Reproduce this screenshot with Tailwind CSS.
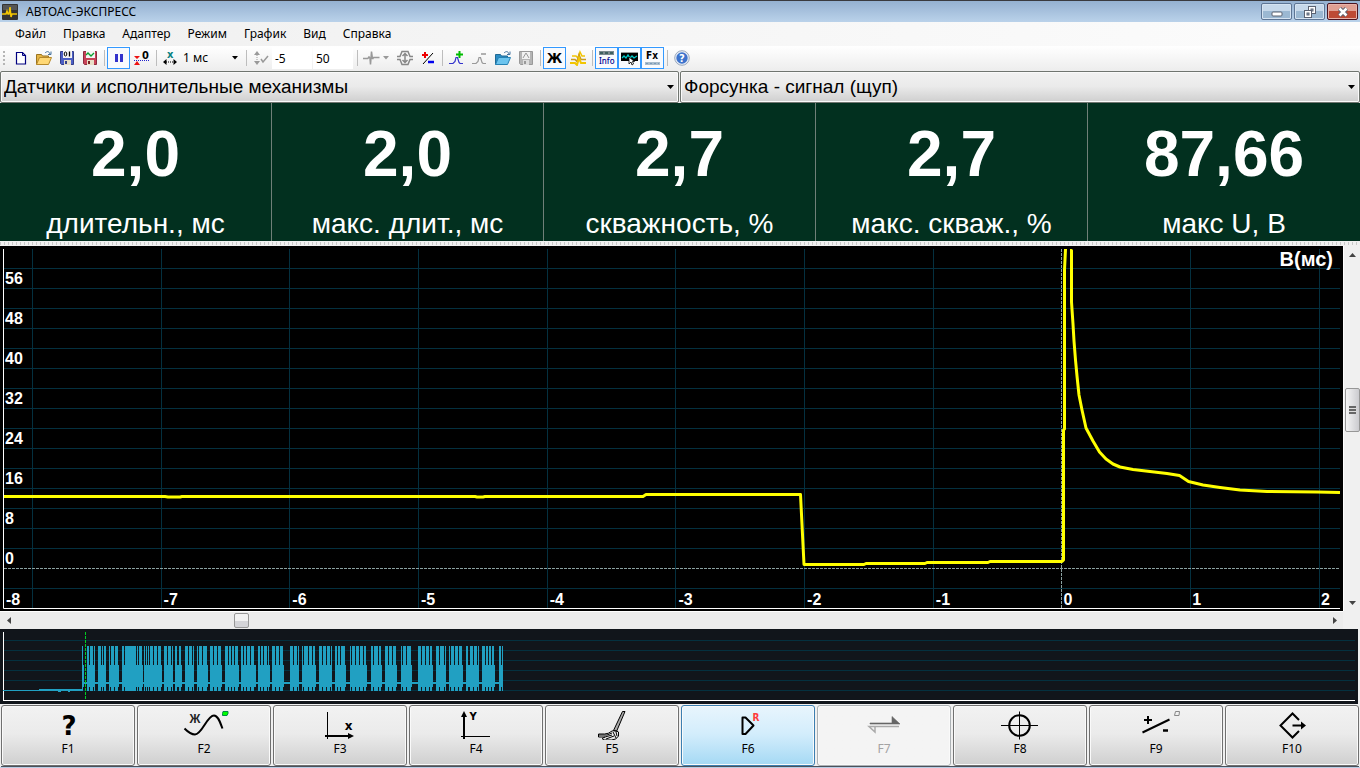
<!DOCTYPE html>
<html lang="ru">
<head>
<meta charset="utf-8">
<title>АВТОАС-ЭКСПРЕСС</title>
<script src="https://cdn.jsdelivr.net/npm/@tailwindcss/browser@4"></script>
</head>
<body class="h-screen overflow-hidden flex flex-col bg-[#f0f0f0] text-black text-[12px] font-['Noto_Sans',sans-serif]">

<!-- Title bar -->
<header class="h-[22px] shrink-0 flex items-center border-t border-[#3a3a3f] bg-linear-to-b from-[#95b1d1] to-[#bad2ea] pl-[2px] pr-[2px]">
  <svg class="size-4" viewBox="0 0 16 16"><rect width="16" height="16" rx="1" fill="#333"/><rect x="1" y="1" width="14" height="5" fill="#555"/><path d="M0 10h4l1-3 1 3h1l1-7 1 10 1-3h5" fill="none" stroke="#f5c800" stroke-width="1.5"/></svg>
  <h1 class="ml-2 grow text-[12px] leading-4">АВТОАС-ЭКСПРЕСС</h1>
  <div class="flex gap-[2px] h-[17px]">
    <button aria-label="Свернуть" class="w-[31px] rounded-[2px] border border-[#5d7594] bg-linear-to-b from-[#c6d8ea] from-50% to-[#9bb8d2] to-50% grid place-items-center shadow-[inset_0_0_0_1px_#d5e3f1]"><svg width="12" height="12" viewBox="0 0 12 12"><rect x="1" y="6" width="10" height="4" rx="1" fill="#fff" stroke="#5b6271"/></svg></button>
    <button aria-label="Восстановить" class="w-[31px] rounded-[2px] border border-[#5d7594] bg-linear-to-b from-[#c6d8ea] from-50% to-[#9bb8d2] to-50% grid place-items-center shadow-[inset_0_0_0_1px_#d5e3f1]"><svg width="14" height="14" viewBox="0 0 14 14" stroke="#5b6271"><rect x="5.500" y="1.500" width="7" height="7" fill="#fff"/><rect x="8" y="4" width="2" height="2" fill="#9bb8d2"/><rect x="1.500" y="5.500" width="7" height="7" fill="#fff"/><rect x="4" y="8" width="2" height="2" fill="#9bb8d2"/></svg></button>
    <button aria-label="Закрыть" class="w-[31px] rounded-[2px] border border-[#4b1420] bg-linear-to-b from-[#e0a093] from-50% to-[#bd4a35] to-50% grid place-items-center shadow-[inset_0_0_0_1px_#e8b3aa]"><svg width="12" height="10" viewBox="0 0 12 10" fill="none"><path d="M2.500 1.500l7 7M9.500 1.500l-7 7" stroke="#5b6271" stroke-width="4.500"/><path d="M2.500 1.500l7 7M9.500 1.500l-7 7" stroke="#fff" stroke-width="2.500"/></svg></button>
  </div>
</header>

<!-- Menu -->
<nav class="h-6 shrink-0 flex items-center gap-[17px] pl-[15px] text-[12px] leading-4 bg-linear-to-r from-[#f0f0f0] to-[#fcfcfc]">
  <a href="#">Файл</a><a href="#">Правка</a><a href="#">Адаптер</a><a href="#">Режим</a><a href="#">График</a><a href="#">Вид</a><a href="#">Справка</a>
</nav>

<!-- Toolbar -->
<div role="toolbar" class="h-[25px] shrink-0 flex items-center pb-[1px] bg-linear-to-b from-white to-[#ededed] *:shrink-0 [&_svg]:block">
  <div class="w-[9px] h-[14px] pl-[3px]"><div class="w-[2px] h-full bg-[repeating-linear-gradient(180deg,#b5b5b5_0_2px,transparent_2px_4px)]"></div></div>
  <button aria-label="Новый" class="w-[23px] h-[22px] grid place-items-center"><svg width="16" height="16" viewBox="0 0 16 16"><path d="M3.500 2.500h6l3 3v8.500h-9z" fill="#fff" stroke="#000080" stroke-width="1.200"/><path d="M9.500 2.500v3h3" fill="none" stroke="#000080"/></svg></button>
  <button aria-label="Открыть" class="w-[23px] h-[22px] grid place-items-center"><svg width="16" height="16" viewBox="0 0 16 16"><path d="M.5 14.500v-10h5l1 1.500h6v3" fill="#e5b545" stroke="#9b7420"/><path d="M.5 14.500l3-7h12l-3 7z" fill="#ffd875" stroke="#b5882b"/><path d="M9 3c2-2 4-2 5 1M15 1.500v3h-3" fill="none" stroke="#45739f"/></svg></button>
  <button aria-label="Сохранить данные" class="w-[23px] h-[22px] grid place-items-center"><svg width="16" height="16" viewBox="0 0 16 16"><path d="M1.500 1.500h13v13h-12l-1-1z" fill="#4c5fc5" stroke="#343f8a"/><rect x="4" y="1" width="9" height="7" fill="#f4f4f4"/><rect x="5" y="10" width="7" height="5" fill="#e8dfc8"/><rect x="6" y="11" width="2" height="3" fill="#343f8a"/><ellipse cx="6.500" cy="4" rx="1.300" ry="2" fill="none" stroke="#000"/><path d="M10.500 1.500v5" stroke="#000" stroke-width="1.300"/></svg></button>
  <button aria-label="Сохранить график" class="w-[23px] h-[22px] grid place-items-center"><svg width="16" height="16" viewBox="0 0 16 16"><path d="M1.500 1.500h13v13h-12l-1-1z" fill="#c74358" stroke="#8d2c40"/><rect x="4" y="1" width="9" height="7" fill="#f4f4f4"/><rect x="5" y="10" width="7" height="5" fill="#e8dfc8"/><rect x="6" y="11" width="2" height="3" fill="#722"/><path d="M4 5l2-2 3 3 3-3" fill="none" stroke="#09a030" stroke-width="1.300"/></svg></button>
  <div class="w-[6px] h-4 grid justify-center"><i class="w-px h-full bg-[#bdbdbd]"></i></div>
  <button aria-label="Пауза" aria-pressed="true" class="w-[23px] h-[22px] border border-[#3399ff] bg-[#f8fafd] grid place-items-center"><svg width="10" height="10" viewBox="0 0 10 10"><path d="M1 1h3v8H1zM6 1h3v8H6z" fill="#3333cc"/></svg></button>
  <button aria-label="Нулевой уровень" class="w-[23px] h-[22px] grid place-items-center"><svg width="16" height="16" viewBox="0 0 16 16"><path d="M0 6h6L3 9zM0 15h6l-3-4z" fill="#e11"/><path d="M0 10.500h16" stroke="#22c" stroke-dasharray="1 1"/><text x="8" y="9" font-family="DejaVu Sans Condensed, DejaVu Sans" font-size="11" font-weight="700">0</text></svg></button>
  <div class="w-[6px] h-4 grid justify-center"><i class="w-px h-full bg-[#bdbdbd]"></i></div>
  <span class="w-[22px] grid place-items-center"><svg width="16" height="16" viewBox="0 0 16 16"><path d="M1 12l3.500-3v6zM15 12l-3.500-3v6z"/><path d="M4 12h8" stroke="#000" stroke-dasharray="1 1"/><text x="5" y="8" font-family="DejaVu Sans" font-size="10" font-weight="700" fill="#088080">x</text></svg></span>
  <div class="w-[62px] grid items-center">
    <select aria-label="Масштаб времени" class="col-start-1 row-start-1 appearance-none w-full pl-[2px] leading-5"><option>1 мс</option></select>
    <svg class="col-start-1 row-start-1 justify-self-end mr-[5px] pointer-events-none" width="6" height="4" viewBox="0 0 6 4"><path d="M0 0h6L3 3.500z"/></svg>
  </div>
  <div class="w-[6px] h-4 grid justify-center"><i class="w-px h-full bg-[#bdbdbd]"></i></div>
  <button aria-label="Пределы по Y" class="w-[23px] h-[22px] grid place-items-center"><svg width="16" height="16" viewBox="0 0 16 16" fill="#999"><path d="M1 5l3-4 3 4zM1 11l3 4 3-4z"/><path d="M4 5v6" stroke="#999" stroke-dasharray="1 1"/><path d="M8 9l2 3 5-6" fill="none" stroke="#999" stroke-width="1.500"/></svg></button>
  <input aria-label="Минимум" value="-5" class="w-10 h-[22px] bg-white pl-[3px]">
  <input aria-label="Максимум" value="50" class="w-10 h-[22px] ml-px bg-white pl-[3px]">
  <div class="w-[8px] h-4 grid justify-center"><i class="w-px h-full bg-[#bdbdbd]"></i></div>
  <button aria-label="Синхронизация" class="w-[32px] h-[22px] flex items-center pl-[2px] gap-[3px]"><svg width="17" height="16" viewBox="0 0 17 16"><path d="M0 8.500h5l1-2 1 2 .5 6L8.500 1.500 9.500 9l1-1.500h6" fill="none" stroke="#999" stroke-width="1.500" stroke-linejoin="bevel"/></svg><svg width="6" height="4" viewBox="0 0 6 4"><path d="M0 0h6L3 3.500z" fill="#999"/></svg></button>
  <button aria-label="Автомасштаб" class="w-[23px] h-[22px] grid place-items-center"><svg width="16" height="16" viewBox="0 0 16 16" fill="none" stroke="#888" stroke-width="1.500"><path d="M0 6.500h3l2-5h6l2 5h3M0 9.500h3l2 5h6l2-5h3M8 4v8M5.500 6L8 3.500 10.500 6M5.500 10L8 12.500l2.500-2.500"/></svg></button>
  <button aria-label="Полярность" class="w-[23px] h-[22px] grid place-items-center"><svg width="16" height="16" viewBox="0 0 16 16" fill="none"><path d="M2 5h6M5 2v6" stroke="#e00" stroke-width="2"/><path d="M3 14L13 3" stroke="#000"/><path d="M8 12h6" stroke="#00e" stroke-width="2.500"/></svg></button>
  <div class="w-[6px] h-4 grid justify-center"><i class="w-px h-full bg-[#bdbdbd]"></i></div>
  <button aria-label="Добавить эталон" class="w-[23px] h-[22px] grid place-items-center"><svg width="16" height="16" viewBox="0 0 16 16" fill="none"><path d="M0 13.500h4l2-2 1-4h1.500l1.500 5 1 1h3" stroke="#33c" stroke-width="1.200"/><path d="M7 4.500h7M10.500 1v7" stroke="#0b0" stroke-width="2"/></svg></button>
  <button aria-label="Убрать эталон" class="w-[23px] h-[22px] grid place-items-center"><svg width="16" height="16" viewBox="0 0 16 16" fill="none" stroke="#999"><path d="M0 13.500h4l2-2 1-4h1.500l1.500 5 1 1h3" stroke-width="1.200"/><path d="M9 4h5" stroke-width="1.500"/></svg></button>
  <button aria-label="Открыть эталон" class="w-[23px] h-[22px] grid place-items-center"><svg width="16" height="16" viewBox="0 0 16 16"><path d="M.5 14.500v-10h5l1 1.500h6v3" fill="#2b8cc4" stroke="#206a94"/><path d="M.5 14.500l3-7h12l-3 7z" fill="#6cc4ee" stroke="#2682b4"/><path d="M9 3c2-2 4-2 5 1M15 1.500v3h-3" fill="none" stroke="#45739f"/></svg></button>
  <button aria-label="Сохранить эталон" class="w-[23px] h-[22px] grid place-items-center"><svg width="16" height="16" viewBox="0 0 16 16"><path d="M1.500 1.500h13v13h-12l-1-1z" fill="#b5b5b5" stroke="#999"/><rect x="4" y="2" width="8" height="7" fill="#f2f2f2"/><path d="M5 8l3-5 3 5" fill="none" stroke="#999"/><rect x="5" y="10" width="6" height="5" fill="#ddd"/><rect x="6" y="11" width="2" height="3" fill="#999"/></svg></button>
  <div class="w-[6px] h-4 grid justify-center"><i class="w-px h-full bg-[#bdbdbd]"></i></div>
  <button aria-pressed="true" class="w-[23px] h-[22px] border border-[#3399ff] bg-[#f8fafd] grid place-items-center font-['DejaVu_Sans_Condensed','DejaVu_Sans'] font-bold text-[14px] leading-4">Ж</button>
  <button aria-label="Сигналы" class="w-[23px] h-[22px] grid place-items-center"><svg width="16" height="16" viewBox="0 0 16 16" fill="none" stroke="#f2c500" stroke-width="1.500"><path d="M2 6h4l2 2 2-6 2 4h3"/><path d="M1 9.500h4l2 2 2-7 2 5h5" stroke="#c89b20"/><path d="M0 13h5l2 2 2-7 2 5h5" stroke-width="2"/></svg></button>
  <div class="w-[6px] h-4 grid justify-center"><i class="w-px h-full bg-[#bdbdbd]"></i></div>
  <button aria-label="Info" aria-pressed="true" class="w-[23px] h-[22px] border border-[#3399ff] bg-[#f8fafd] grid place-items-center"><svg width="17" height="16" viewBox="0 0 17 16"><rect x="1" y="1" width="15" height="4" fill="#7b8b90"/><path d="M2 3h13" stroke="#3e6060" stroke-width="2" stroke-dasharray="3 2"/><text x="1" y="14" font-family="Noto Sans" font-size="8" font-weight="500" fill="#000090">Info</text></svg></button>
  <button aria-label="Осциллограмма" aria-pressed="true" class="w-[23px] h-[22px] border border-[#3399ff] bg-[#f8fafd] grid place-items-center"><svg width="17" height="16" viewBox="0 0 17 16"><path d="M0 2.500h17" stroke="#999"/><rect y="3" width="17" height="8" fill="#000"/><path d="M1 8l2-2 2 2 2-3 2 3 2-2 2 2 3-2" fill="none" stroke="#00c8c8" stroke-width="1.300"/><path d="M8 7v7l2-2 1 3 1.500-1-1-2.500h2z" fill="#fff" stroke="#000" stroke-width=".8"/></svg></button>
  <button aria-label="Fx" aria-pressed="true" class="w-[23px] h-[22px] border border-[#3399ff] bg-[#f8fafd] grid place-items-center"><svg width="17" height="16" viewBox="0 0 17 16"><text x="2" y="9" font-family="DejaVu Sans Condensed, DejaVu Sans" font-size="10" font-weight="700">Fx</text><rect x="1" y="12" width="15" height="3" fill="#a9bccb"/><path d="M2 13.500h13" stroke="#7899b8" stroke-dasharray="2 2"/></svg></button>
  <div class="w-[6px] h-4 grid justify-center"><i class="w-px h-full bg-[#bdbdbd]"></i></div>
  <button aria-label="Помощь" class="w-[23px] h-[22px] grid place-items-center"><svg width="16" height="16" viewBox="0 0 16 16"><circle cx="8" cy="8" r="7.300" fill="#e9eef6" stroke="#9aa8bd"/><circle cx="8" cy="8" r="5.700" fill="#3d73cc"/><text x="8" y="12" text-anchor="middle" font-family="DejaVu Sans" font-size="10" font-weight="700" fill="#fff">?</text></svg></button>
</div>

<!-- Mode selectors -->
<div class="h-8 shrink-0 grid grid-cols-2 text-[19px] font-['Liberation_Sans',sans-serif]">
  <div class="grid items-center mr-px">
    <select aria-label="Группа измерений" class="col-start-1 row-start-1 w-full h-8 appearance-none rounded-[2px] border border-[#707570] bg-linear-to-b from-[#f2f2f2] from-0% via-[#ebebeb] via-47% to-[#cfcfcf] pl-[3px] shadow-[inset_0_0_0_1px_#fafafa]"><option>Датчики и исполнительные механизмы</option></select>
    <svg class="col-start-1 row-start-1 justify-self-end mr-[5px] pointer-events-none" width="7" height="4" viewBox="0 0 7 4"><path d="M0 0h7L3.500 4z"/></svg>
  </div>
  <div class="grid items-center">
    <select aria-label="Вид измерения" class="col-start-1 row-start-1 w-full h-8 appearance-none rounded-[2px] border border-[#707570] bg-linear-to-b from-[#f2f2f2] from-0% via-[#ebebeb] via-47% to-[#cfcfcf] pl-[3px] shadow-[inset_0_0_0_1px_#fafafa]"><option>Форсунка - сигнал (щуп)</option></select>
    <svg class="col-start-1 row-start-1 justify-self-end mr-[5px] pointer-events-none" width="7" height="4" viewBox="0 0 7 4"><path d="M0 0h7L3.500 4z"/></svg>
  </div>
</div>

<!-- Readings -->
<section class="h-[138px] shrink-0 grid grid-cols-5 bg-[#02301f] text-white text-center font-['Liberation_Sans',sans-serif] *:border-r *:border-[#6f8078] *:pt-[17px] *:last:border-r-0">
  <div><p class="text-[64px] leading-[68px] font-bold">2,0</p><p class="mt-5 text-[28px] leading-8">длительн., мс</p></div>
  <div><p class="text-[64px] leading-[68px] font-bold">2,0</p><p class="mt-5 text-[28px] leading-8">макс. длит., мс</p></div>
  <div><p class="text-[64px] leading-[68px] font-bold">2,7</p><p class="mt-5 text-[28px] leading-8">скважность, %</p></div>
  <div><p class="text-[64px] leading-[68px] font-bold">2,7</p><p class="mt-5 text-[28px] leading-8">макс. скваж., %</p></div>
  <div><p class="text-[64px] leading-[68px] font-bold">87,66</p><p class="mt-5 text-[28px] leading-8">макс U, В</p></div>
</section>
<div class="h-[5px] shrink-0 py-px bg-[#f0f0f0]"><div class="h-full bg-[repeating-linear-gradient(90deg,#c8c8c8_0_1px,#f0f0f0_1px_4px)]"></div></div>

<!-- Main chart and its vertical scrollbar -->
<main class="grow min-h-0 flex">
  <div id="chart" class="grow min-w-0 relative bg-black text-white font-bold font-['Liberation_Sans',sans-serif]">
    <svg id="plot" class="absolute inset-0 size-full" viewBox="0 0 1343 365" preserveAspectRatio="none">
      <g id="grid" stroke="#04303f"></g>
      <path d="M4 322.500H1339" stroke="#8aa0a0" stroke-dasharray="3 1" vector-effect="non-scaling-stroke"/>
      <path d="M1061.500 3V362" stroke="#8aa0a0" stroke-dasharray="3 1" vector-effect="non-scaling-stroke"/>
      <path d="M3.500 3V362.500H1340" fill="none" stroke="#fff" vector-effect="non-scaling-stroke"/>
      <path fill="none" stroke="#ff0" stroke-width="3" stroke-linejoin="round" vector-effect="non-scaling-stroke" d="M4 250.500H165L168 251H180L182 250.500H475L477 251H483L485 250.500H643L646 248.500H800.500L804 318.500H864L866 317.500H925L927 316.500H988L990 315.500H1062L1063.500 314V184L1064.500 183V24L1065.500 3M1070 4.500H1071.500V56L1073 78L1074 95L1075.500 114L1077 130L1079 149L1082 164L1086 182L1093 195L1099.500 206L1106 213L1113 218L1120 221L1133 223.500L1150 225.500L1167 227.500L1179.500 229.500L1188.500 235.500L1203 239L1220 241.500L1240 244L1267 245.500L1317 246L1340 246.500"/>
    </svg>
    <span class="absolute right-[10px] top-[1px] text-[20px] leading-6">В(мс)</span>
  </div>
  <div role="scrollbar" aria-label="Вертикальная прокрутка" aria-controls="chart" aria-orientation="vertical" aria-valuenow="43" class="w-[17px] shrink-0 flex flex-col items-center bg-[#f0f0f0] border-l border-white">
    <button aria-label="Вверх" class="h-[17px] w-full grid place-items-center"><svg width="7" height="4" viewBox="0 0 7 4"><path d="M0 4h7L3.500 0z" fill="#444"/></svg></button>
    <div class="grow-[125]"></div>
    <div class="h-[44px] w-[15px] rounded-[2px] border border-[#979797] bg-linear-to-r from-[#f5f5f5] to-[#cbcbcf] grid place-items-center"><div class="w-[7px] h-[8px] bg-[repeating-linear-gradient(180deg,#666_0_2px,#ddd_2px_3px)]"></div></div>
    <div class="grow-[163]"></div>
    <button aria-label="Вниз" class="h-[17px] w-full grid place-items-center"><svg width="7" height="4" viewBox="0 0 7 4"><path d="M0 0h7L3.500 4z" fill="#444"/></svg></button>
  </div>
</main>

<!-- Horizontal scrollbar -->
<div role="scrollbar" aria-label="Горизонтальная прокрутка" aria-controls="chart" aria-orientation="horizontal" aria-valuenow="17" class="h-[18px] shrink-0 mr-[17px] flex items-center bg-[#ececec] border-t border-white">
  <button aria-label="Влево" class="w-[17px] h-full grid place-items-center"><svg width="4" height="7" viewBox="0 0 4 7"><path d="M4 0v7L0 3.500z" fill="#444"/></svg></button>
  <div class="grow-[217]"></div>
  <div class="h-[15px] w-[15px] rounded-[2px] border border-[#979797] bg-linear-to-b from-[#f2f2f2] from-50% to-[#d4d4d8] to-50%"></div>
  <div class="grow-[1077]"></div>
  <button aria-label="Вправо" class="w-[17px] h-full grid place-items-center"><svg width="4" height="7" viewBox="0 0 4 7"><path d="M0 0v7l4-3.500z" fill="#444"/></svg></button>
</div>

<!-- Whole record overview -->
<div class="h-[75px] shrink-0 mr-[2px] bg-[#11151b]">
  <svg class="block size-full" viewBox="0 0 1358 75" preserveAspectRatio="none" shape-rendering="crispEdges">
    <path d="M4 11.500H1355M4 21.500H1355M4 31.500H1355M4 41.500H1355M4 51.500H1355M4 61.500H1355" stroke="#04303f"/>
    <path d="M3.500 3V71.500H1355" fill="none" stroke="#fff"/>
    <path d="M3 61h36v-1h43v2H70v1h-2v-1h-7v1h-3v-1H3z" fill="#21a0c2"/>
    <g id="bursts" fill="#21a0c2"></g>
    <path d="M85.500 3V70" stroke="#0c2" stroke-dasharray="3 1"/>
  </svg>
</div>

<!-- Function keys -->
<footer class="shrink-0 pt-[1px] px-px border-b border-[#b9cde4]">
  <div class="grid grid-cols-10 gap-[2px] text-[12px] leading-4 border-b border-[#4a525c] *:h-[61px] *:flex *:flex-col *:items-center *:pt-[2px] *:rounded-[3px] *:border *:border-[#707070] *:bg-linear-to-b *:from-[#f2f2f2] *:from-0% *:via-[#ebebeb] *:via-47% *:to-[#cfcfcf] *:shadow-[inset_0_0_0_1px_#fafafa] [&_svg]:w-14 [&_svg]:h-8 [&_svg]:mb-px [&_svg]:shrink-0">
    <button><svg viewBox="0 0 56 32"><text x="29" y="27" text-anchor="middle" font-family="DejaVu Sans" font-size="26" font-weight="700">?</text></svg>F1</button>
    <button><svg viewBox="0 0 56 32"><path d="M8.500 20.500C13 25 16 26.500 19 26.500C26 26.500 31 7.500 38 7.500C42 7.500 44 14 46.500 20.500" fill="none" stroke="#000" stroke-width="2"/><text x="19" y="15" text-anchor="middle" font-family="Liberation Sans" font-size="12" font-weight="700" fill="#222">Ж</text><path d="M47 3.500h5v2l-1 2h-4.500v-2z" fill="#0f0" stroke="#084"/></svg>F2</button>
    <button><svg viewBox="0 0 56 32"><path d="M15.500 4v27" stroke="#000"/><path d="M13 28h25" stroke="#000" stroke-width="2"/><path d="M36 25l6 3-6 3z"/><text x="36.500" y="22" text-anchor="middle" font-family="DejaVu Sans" font-size="12" font-weight="700">x</text></svg>F3</button>
    <button><svg viewBox="0 0 56 32"><path d="M16 7v24" stroke="#000" stroke-width="2"/><path d="M13 28.500h29" stroke="#000"/><path d="M16 3l3 6h-6z"/><text x="25" y="12" text-anchor="middle" font-family="DejaVu Sans" font-size="10" font-weight="700">Y</text></svg>F4</button>
    <button><svg viewBox="0 0 56 32" fill="none" stroke="#000"><path d="M38.500 3.500h2.500l-8.500 20-3-1z" fill="#aaa"/><path d="M28 23q4-1.500 6.500 1v4q-2 4-7 4H20l-2-1.500 3-1.500h-6.500v-3h6q4 0 7.500-3zM21 29l7-2M15 27h8l5-2M22 31l8-3M29 24l3 6M32 24l1 4"/></svg>F5</button>
    <button class="border-[#3c7fb1]! from-[#e8f5fd]! via-[#d3edfc]! to-[#a5d9f4]!"><svg viewBox="0 0 56 32"><path d="M22.500 9.500h3l8 8-8 8.500h-3z" fill="none" stroke="#000" stroke-width="2" stroke-linejoin="round"/><text x="36" y="13" text-anchor="middle" font-family="DejaVu Sans Condensed, DejaVu Sans" font-size="10" font-weight="700" fill="#ff3b3b">R</text></svg>F6</button>
    <button disabled class="border-[#adb2b5]! from-[#f4f4f4]! via-[#f4f4f4]! to-[#f4f4f4]! text-[#a3a3a3]"><svg viewBox="0 0 56 32"><path d="M14 15h22V8.500l8 7.500H14z" fill="#666" stroke="#666" stroke-width=".6"/><path d="M43 18.500H13l6 5.500v-5" fill="none" stroke="#aaa" stroke-width="1.500"/></svg>F7</button>
    <button><svg viewBox="0 0 56 32" fill="none" stroke="#000"><circle cx="27.500" cy="17.500" r="10.300" stroke-width="2"/><path d="M9 17.500h37M27.500 3.500v28"/></svg>F8</button>
    <button><svg viewBox="0 0 56 32" fill="none" stroke="#000" stroke-width="2"><path d="M16 12h8M20 8v8M14.500 24.500l27-13"/><path d="M35 22.500h5" stroke-width="2.500"/><path d="M47.500 3.500h4l-.5 4h-4.500z" stroke="#888" stroke-width="1"/></svg>F9</button>
    <button><svg viewBox="0 0 56 32" fill="none" stroke="#000" stroke-width="2"><path d="M35 12l-6.500-6.500L16.500 17.500l12 12L35 23M28.500 17.500h10"/><path d="M37 13.500l5 4-5 4z" fill="#000" stroke="none"/></svg>F10</button>
  </div>
</footer>

<script>
  const NS = 'http://www.w3.org/2000/svg';
  const W = 1343, H = 365;
  const grid = document.getElementById('grid');
  const chart = document.getElementById('chart');
  function line(d) {
    const p = document.createElementNS(NS, 'path');
    p.setAttribute('d', d);
    p.setAttribute('vector-effect', 'non-scaling-stroke');
    grid.append(p);
  }
  function label(text, x, y) {
    const s = document.createElement('span');
    s.className = 'absolute text-[16px] leading-4 -translate-y-1/2';
    s.textContent = text;
    s.style.left = x / W * 100 + '%';
    s.style.top = y / H * 100 + '%';
    chart.append(s);
  }
  for (let y = 22; y < 360; y += 20) if (y !== 322) line(`M4 ${y + 0.5}H1340`);
  [32, 161, 289, 418, 547, 675, 804, 933, 1190, 1319].forEach(x => line(`M${x + 0.5} 3V362`));
  for (let v = 0; v <= 56; v += 8) label(v, 5, 313 - v * 5);
  label('-8', 6, 354);
  for (let v = -7; v <= 2; v++) label(v, 1061.5 + v * 128.7 + (v < 0 ? 3 : 2), 354);

  // Bursts of the record: [body start, body end, [tall pulse start, end], ...] in thirds of a unit
  const bursts = [
    [246,252,[246,249]],
    [261,285,[261,267],[270,279],[282,285]],
    [294,318,[294,303],[306,309],[312,318]],
    [327,357,[327,330],[333,342],[345,354]],
    [366,429,[366,372],[375,408],[411,414],[417,426]],
    [432,486,[432,435],[438,441],[444,447],[450,459],[462,471],[474,483]],
    [492,519,[492,501],[504,513],[516,519]],
    [525,546,[525,531],[537,543]],
    [555,582,[555,564],[567,576],[579,582]],
    [591,624,[591,594],[597,606],[609,621]],
    [630,666,[630,639],[642,651],[654,663]],
    [675,717,[675,684],[687,693],[696,702],[705,714]],
    [723,768,[723,729],[732,738],[741,750],[753,762]],
    [774,810,[774,780],[783,789],[792,801],[804,807]],
    [816,852,[816,825],[828,837],[840,849]],
    [870,897,[870,879],[882,891],[894,897]],
    [906,948,[906,909],[912,924],[927,936],[939,945]],
    [957,996,[957,966],[969,978],[981,990],[993,996]],
    [1005,1038,[1005,1011],[1014,1020],[1023,1035]],
    [1050,1101,[1050,1053],[1056,1065],[1068,1077],[1080,1089],[1092,1098]],
    [1113,1146,[1113,1119],[1122,1134],[1137,1143]],
    [1155,1191,[1155,1164],[1167,1176],[1179,1188]],
    [1203,1236,[1203,1206],[1209,1218],[1221,1233]],
    [1254,1299,[1254,1263],[1266,1275],[1278,1287],[1290,1296]],
    [1308,1338,[1308,1317],[1320,1332],[1335,1338]],
    [1347,1389,[1347,1350],[1353,1362],[1365,1374],[1377,1386]],
    [1398,1437,[1398,1404],[1410,1419],[1422,1431],[1434,1437]],
    [1446,1485,[1446,1455],[1458,1464],[1467,1473],[1476,1482]],
    [1497,1509,[1497,1503],[1506,1509]]
  ];
  function addBursts(d) {
    const p = document.createElementNS(NS, 'path');
    p.setAttribute('d', d);
    document.getElementById('bursts').append(p);
  }
  addBursts('M82 53H503v2H82z');
  bursts.forEach(([a, b, ...tall]) => {
    addBursts(`M${a / 3} 36H${b / 3}V58H${a / 3}z`);
    tall.forEach(([s, e]) => addBursts(`M${s / 3} 17H${e / 3}V62H${s / 3}z`));
  });
</script>
</body>
</html>
